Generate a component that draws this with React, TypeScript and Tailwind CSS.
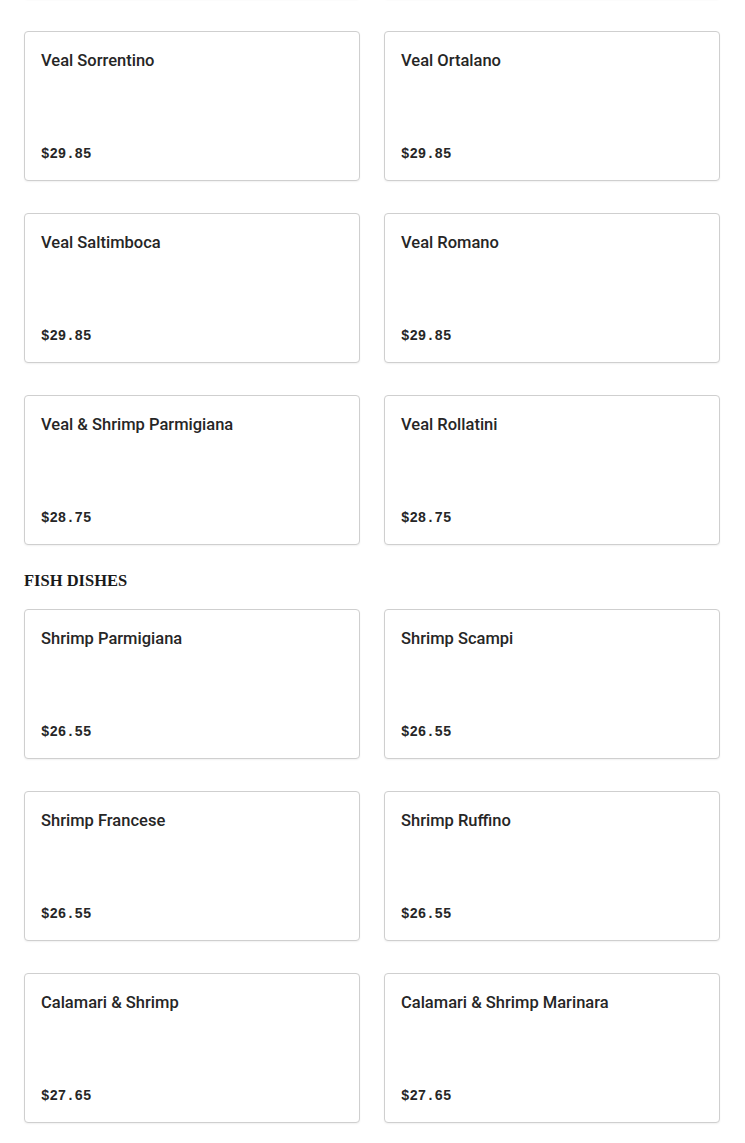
const vealDishes: [string, string][] = [
  ['Veal Sorrentino', '$29.85'],
  ['Veal Ortalano', '$29.85'],
  ['Veal Saltimboca', '$29.85'],
  ['Veal Romano', '$29.85'],
  ['Veal & Shrimp Parmigiana', '$28.75'],
  ['Veal Rollatini', '$28.75'],
]

const fishDishes: [string, string][] = [
  ['Shrimp Parmigiana', '$26.55'],
  ['Shrimp Scampi', '$26.55'],
  ['Shrimp Francese', '$26.55'],
  ['Shrimp Ruffino', '$26.55'],
  ['Calamari & Shrimp', '$27.65'],
  ['Calamari & Shrimp Marinara', '$27.65'],
]

const cardClass =
  'h-[150px] rounded border border-[#cfcfcf] bg-white shadow-[0_1px_2px_rgba(0,0,0,0.06)]'

function MenuCard({ name, price }: { name: string; price: string }) {
  return (
    <div className={`flex flex-col justify-between p-4 ${cardClass}`}>
      <h3 className="mt-px font-['Roboto',sans-serif] text-[16.5px] font-medium leading-6 text-[#262626]">
        {name}
      </h3>
      <p className="font-['Liberation_Mono',monospace] text-sm font-bold leading-5 text-[#262626]">
        {price}
      </p>
    </div>
  )
}

export default function App() {
  return (
    <div className="min-h-screen overflow-hidden bg-white pl-6">
      <div className="w-[696px]">
        {/* tail of the row scrolled above */}
        <div className="-mt-[151px] grid grid-cols-2 gap-x-6">
          <div className={cardClass} />
          <div className={cardClass} />
        </div>

        <div className="mt-8 grid grid-cols-2 gap-x-6 gap-y-8">
          {vealDishes.map(([name, price]) => (
            <MenuCard key={name} name={name} price={price} />
          ))}
        </div>

        <h2 className="mt-6 mb-4 font-['Liberation_Serif',serif] text-[16.5px] font-bold leading-6 text-[#1a1a1a]">
          FISH DISHES
        </h2>

        <div className="grid grid-cols-2 gap-x-6 gap-y-8 pb-8">
          {fishDishes.map(([name, price]) => (
            <MenuCard key={name} name={name} price={price} />
          ))}
        </div>
      </div>
    </div>
  )
}
